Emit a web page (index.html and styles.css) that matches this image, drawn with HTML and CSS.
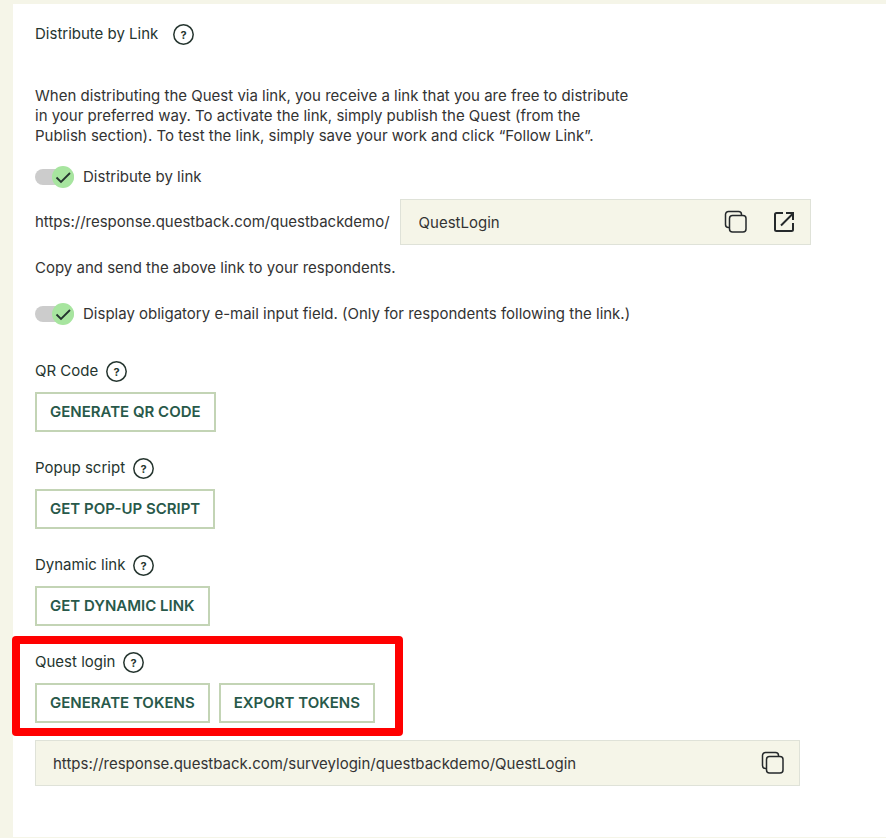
FILE: index.html
```html
<!DOCTYPE html>
<html lang="en">
<head>
  <meta charset="UTF-8" />
  <meta name="viewport" content="width=device-width, initial-scale=1.0"/>
  <title>Distribute by Link</title>
  <link rel="stylesheet" href="styles.css">
</head>
<body>

<main class="panel">
  <div class="heading title">
    <h1>Distribute by Link</h1>
    <button class="help" type="button"><svg viewBox="0 0 21 21"><circle cx="10.5" cy="10.5" r="9.700"/><text x="10.5" y="14.5">?</text></svg></button>
  </div>

  <p class="intro">When distributing the Quest via link, you receive a link that you are free to distribute<br>
    in your preferred way. To activate the link, simply publish the Quest (from the<br>
    Publish section). To test the link, simply save your work and click “Follow Link”.</p>

  <label class="toggle">
    <input type="checkbox" checked>
    <span class="track"><svg class="knob" viewBox="0 0 22 22"><circle cx="11" cy="11" r="11" fill="#a7e59f"/><path d="M4.5 11.5l4.500 4.500L18 7" fill="none" stroke="#25352f" stroke-width="1.8"/></svg></span>
    <span>Distribute by link</span>
  </label>

  <div class="link-row">
    <label for="linkName">https://response.questback.com/questbackdemo/</label>
    <div class="field">
      <input type="text" id="linkName" value="QuestLogin">
      <button class="icon" type="button" aria-label="Copy link">
        <svg viewBox="0 0 24 24"><path d="M5 17.5H4.500a3 3 0 0 1-3-3v-10a3 3 0 0 1 3-3h10a3 3 0 0 1 3 3V5"/><rect x="5.500" y="5.500" width="16.500" height="16.500" rx="3"/></svg>
      </button>
      <a class="icon" href="#" aria-label="Follow link">
        <svg class="bold" viewBox="0 0 24 24"><path d="M11 3H4.500Q3 3 3 4.500v15Q3 21 4.500 21h15q1.500 0 1.500-1.500V13M9 15.500L20.500 4M14 3H21v7"/></svg>
      </a>
    </div>
  </div>

  <p class="hint">Copy and send the above link to your respondents.</p>

  <label class="toggle">
    <input type="checkbox" checked>
    <span class="track"><svg class="knob" viewBox="0 0 22 22"><circle cx="11" cy="11" r="11" fill="#a7e59f"/><path d="M4.5 11.5l4.500 4.500L18 7" fill="none" stroke="#25352f" stroke-width="1.8"/></svg></span>
    <span>Display obligatory e-mail input field. (Only for respondents following the link.)</span>
  </label>

  <div class="groups">
    <section class="group">
      <div class="heading">
        <h2>QR Code</h2>
        <button class="help" type="button"><svg viewBox="0 0 21 21"><circle cx="10.5" cy="10.5" r="9.700"/><text x="10.5" y="14.5">?</text></svg></button>
      </div>
      <div class="actions">
        <button class="btn" type="button">GENERATE QR CODE</button>
      </div>
    </section>

    <section class="group">
      <div class="heading">
        <h2>Popup script</h2>
        <button class="help" type="button"><svg viewBox="0 0 21 21"><circle cx="10.5" cy="10.5" r="9.700"/><text x="10.5" y="14.5">?</text></svg></button>
      </div>
      <div class="actions">
        <button class="btn" type="button">GET POP-UP SCRIPT</button>
      </div>
    </section>

    <section class="group">
      <div class="heading">
        <h2>Dynamic link</h2>
        <button class="help" type="button"><svg viewBox="0 0 21 21"><circle cx="10.5" cy="10.5" r="9.700"/><text x="10.5" y="14.5">?</text></svg></button>
      </div>
      <div class="actions">
        <button class="btn" type="button">GET DYNAMIC LINK</button>
      </div>
    </section>

    <section class="group highlighted">
      <div class="heading">
        <h2>Quest login</h2>
        <button class="help" type="button"><svg viewBox="0 0 21 21"><circle cx="10.5" cy="10.5" r="9.700"/><text x="10.5" y="14.5">?</text></svg></button>
      </div>
      <div class="actions">
        <button class="btn" type="button">GENERATE TOKENS</button>
        <button class="btn" type="button">EXPORT TOKENS</button>
      </div>
    </section>
  </div>

  <div class="field login-link">
    <input type="text" aria-label="Quest login link" value="https://response.questback.com/surveylogin/questbackdemo/QuestLogin" readonly>
    <button class="icon" type="button" aria-label="Copy login link">
      <svg viewBox="0 0 24 24"><path d="M5 17.5H4.500a3 3 0 0 1-3-3v-10a3 3 0 0 1 3-3h10a3 3 0 0 1 3 3V5"/><rect x="5.500" y="5.500" width="16.500" height="16.500" rx="3"/></svg>
    </button>
  </div>
</main>

</body>
</html>
```
FILE: styles.css
```css
* {
  box-sizing: border-box;
}

body {
  margin: 0;
  padding: 4px 0 1px 13px;
  background-color: #f5f5e8;
  color: #333;
  font-family: Inter, sans-serif;
  font-size: 15px;
  line-height: 20px;
}

h1, h2, p {
  margin: 0;
}

h1, h2 {
  font-size: 15px;
  font-weight: 400;
  line-height: 20px;
}

input, button {
  font-family: inherit;
  color: inherit;
}

.panel {
  background-color: #fff;
  padding: 20px 22px 51px;
}

.heading {
  display: flex;
  align-items: flex-start;
  gap: 8px;
  height: 21px;
  color: #25352f;
}

.title {
  gap: 15px;
}

.help {
  width: 21px;
  height: 21px;
  padding: 0;
  border: none;
  background: none;
  cursor: pointer;
}

.help svg {
  display: block;
  width: 21px;
  height: 21px;
}

.help circle {
  fill: none;
  stroke: #25352f;
  stroke-width: 1.5;
}

.help text {
  fill: #25352f;
  font-size: 11px;
  font-weight: 700;
  text-anchor: middle;
}

.intro {
  margin: 41px 0 20px;
}

.toggle {
  display: flex;
  align-items: center;
  gap: 9px;
  height: 22px;
}

.toggle input {
  position: absolute;
  opacity: 0;
}

.track {
  display: flex;
  align-items: center;
  justify-content: flex-end;
  width: 39px;
  height: 16px;
  border-radius: 8px;
  background-color: #ccc;
}

.knob {
  flex: none;
  width: 22px;
  height: 22px;
}

.link-row {
  display: flex;
  align-items: center;
  gap: 10px;
  max-width: 776px;
  margin: 11px 0 13px;
}

.field {
  display: flex;
  flex: 1;
  align-items: center;
  gap: 24px;
  height: 46px;
  padding: 0 14px 0 18px;
  border: 1px solid #dfe2d8;
  background-color: #f5f5e8;
}

.field input {
  flex: 1;
  min-width: 0;
  padding: 0;
  border: none;
  background: none;
  font-size: 15px;
}

.icon {
  display: flex;
  padding: 0;
  border: none;
  background: none;
  color: #25292b;
  cursor: pointer;
}

.icon svg {
  width: 24px;
  height: 24px;
  fill: none;
  stroke: currentColor;
  stroke-width: 1.5;
}

.icon .bold {
  stroke-width: 2;
}

.hint {
  margin-bottom: 25px;
}

.groups {
  display: flex;
  flex-direction: column;
  align-items: flex-start;
  gap: 26px;
  margin-top: 36px;
}

.group {
  position: relative;
}

.actions {
  display: flex;
  gap: 9px;
  margin-top: 10px;
}

.btn {
  height: 40px;
  padding: 0 13px 2px;
  border: 2px solid #c3d4b5;
  background-color: #fff;
  color: #28594a;
  font-size: 15px;
  font-weight: 600;
  cursor: pointer;
}

.highlighted::after {
  content: "";
  position: absolute;
  inset: -16px -28px -13px -23px;
  border: 8px solid #f00;
  border-radius: 4px;
  pointer-events: none;
}

.login-link {
  max-width: 765px;
  margin-top: 17px;
  padding: 0 14px 0 17px;
}
```
